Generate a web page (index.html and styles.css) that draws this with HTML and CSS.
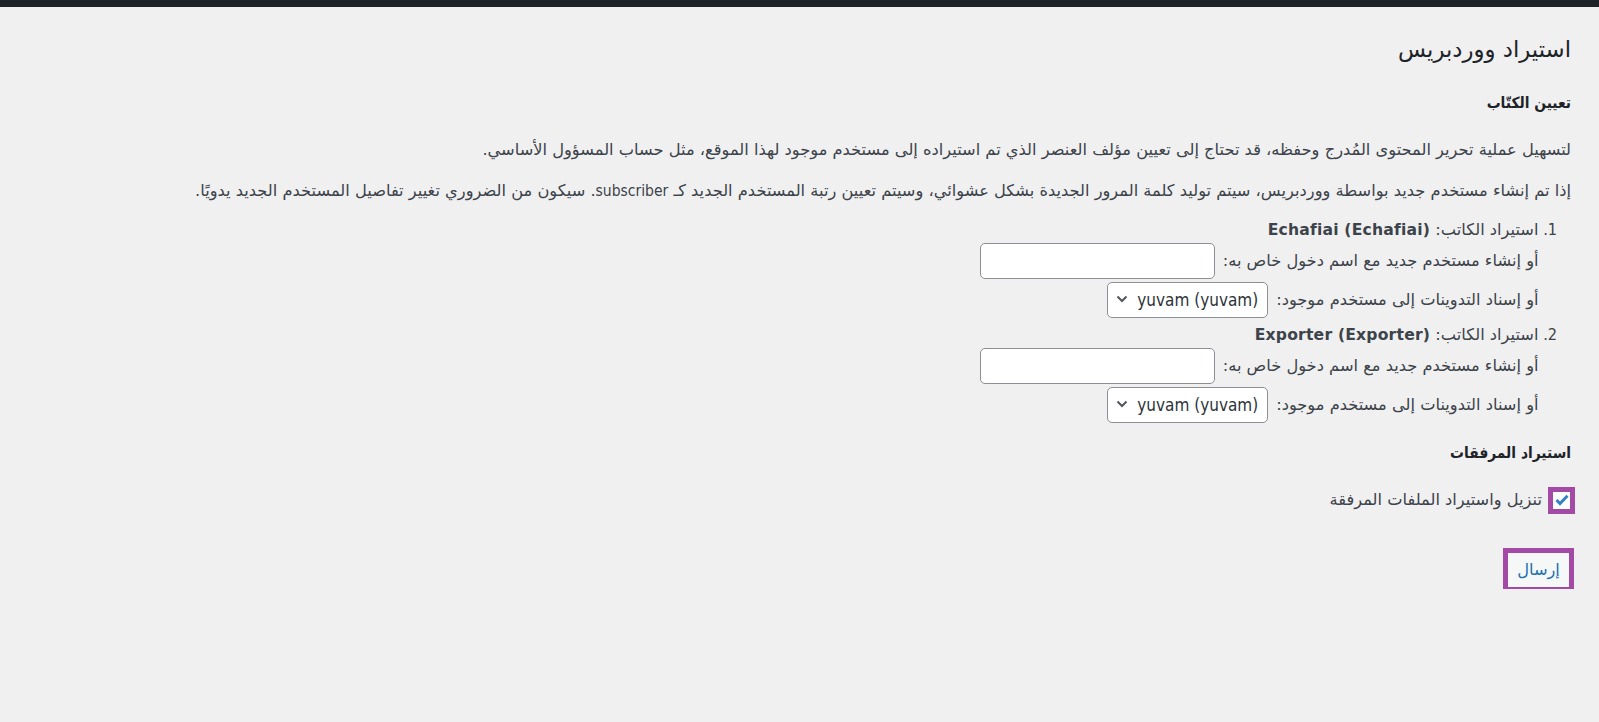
FILE: index.html
```html
<!DOCTYPE html>
<html lang="ar" dir="rtl">
<head>
<meta charset="utf-8">
<title>استيراد ووردبريس</title>
<link rel="stylesheet" href="styles.css">
</head>
<body>
<div class="adminbar"></div>
<div class="wrap">
  <h1 class="page-title">استيراد ووردبريس</h1>
  <h3 class="section-title">تعيين الكتّاب</h3>
  <p class="intro">لتسهيل عملية تحرير المحتوى المُدرج وحفظه، قد تحتاج إلى تعيين مؤلف العنصر الذي تم استيراده إلى مستخدم موجود لهذا الموقع، مثل حساب المسؤول الأساسي.</p>
  <p class="intro intro-second">إذا تم إنشاء مستخدم جديد بواسطة ووردبريس، سيتم توليد كلمة المرور الجديدة بشكل عشوائي، وسيتم تعيين رتبة المستخدم الجديد كـ <span class="latin">subscriber</span>. سيكون من الضروري تغيير تفاصيل المستخدم الجديد يدويًا.</p>
  <ol class="authors">
    <li class="author">
      <div class="author-title">استيراد الكاتب: <strong class="latin-bold">Echafiai (Echafiai)</strong></div>
      <div class="author-row"><span>أو إنشاء مستخدم جديد مع اسم دخول خاص به:</span><input type="text" class="text-field"></div>
      <div class="author-row row-select"><span>أو إسناد التدوينات إلى مستخدم موجود:</span><span class="select-wrap"><select class="select-field"><option>yuvam (yuvam)</option></select><svg class="chevron" width="12" height="8" viewBox="0 0 12 8"><path d="M1.5 1.5 L6 6 L10.5 1.5" fill="none" stroke="#50575e" stroke-width="2"/></svg></span></div>
    </li>
    <li class="author">
      <div class="author-title">استيراد الكاتب: <strong class="latin-bold">Exporter (Exporter)</strong></div>
      <div class="author-row"><span>أو إنشاء مستخدم جديد مع اسم دخول خاص به:</span><input type="text" class="text-field"></div>
      <div class="author-row row-select"><span>أو إسناد التدوينات إلى مستخدم موجود:</span><span class="select-wrap"><select class="select-field"><option>yuvam (yuvam)</option></select><svg class="chevron" width="12" height="8" viewBox="0 0 12 8"><path d="M1.5 1.5 L6 6 L10.5 1.5" fill="none" stroke="#50575e" stroke-width="2"/></svg></span></div>
    </li>
  </ol>
  <h3 class="section-title attachments-title">استيراد المرفقات</h3>
  <div class="check-row">
    <label class="check-label"><span class="check-box"><svg width="14" height="12" viewBox="0 0 14 12"><path d="M1.5 6 L5 9.5 L12.5 1.8" fill="none" stroke="#3582c4" stroke-width="3"/></svg></span><span>تنزيل واستيراد الملفات المرفقة</span></label>
  </div>
  <p class="submit"><button type="button" class="button">إرسال</button></p>
</div>
</body>
</html>
```

FILE: styles.css
```css
* { box-sizing: border-box; }
html, body { margin: 0; padding: 0; background: #f0f0f1; }
body {
  font-family: "DejaVu Sans", sans-serif;
  font-size: 16.25px;
  line-height: 24.4px;
  color: #3c434a;
}
.latin { font-family: "DejaVu Sans Condensed", "DejaVu Sans", sans-serif; font-size: 15.5px; }
.latin-bold {
  font-family: "DejaVu Sans", sans-serif;
  font-size: 15.6px; font-weight: 700;
  letter-spacing: 0.2px;
  color: #3c434a;
}
.adminbar { height: 7px; background: #1d2327; }
.wrap { padding: 0 28px 0 20px; }
.page-title {
  margin: 26px 0 0;
  font-size: 22.8px;
  font-weight: 400;
  line-height: 33px;
  color: #1d2327;
}
.section-title {
  margin: 25px 0 0;
  font-family: "DejaVu Sans Condensed", "DejaVu Sans", sans-serif;
  font-size: 15.4px;
  font-weight: 700;
  line-height: 24px;
  color: #1d2327;
}
.intro { margin: 23px 0 0; }
.intro-second { margin-top: 17px; }
.authors { margin: 14.4px 32.5px 0 0; padding: 0; list-style: decimal; }
.author { margin-bottom: 4.6px; }
.author::marker { font-family: "DejaVu Sans Condensed", "DejaVu Sans", sans-serif; font-size: 16.25px; }
.author-title { height: 24.4px; white-space: nowrap; }
.author-row { display: flex; align-items: center; gap: 8px; margin-top: 0.6px; }
.row-select { margin-top: 3px; }
.text-field {
  width: 235px; height: 36px;
  border: 1px solid #8c8f94; border-radius: 5px;
  background: #fff; font: inherit; padding: 0 10px;
}
.select-wrap { position: relative; display: inline-flex; }
.select-field {
  -webkit-appearance: none; appearance: none;
  width: 161px; height: 36px;
  border: 1px solid #8c8f94; border-radius: 5px;
  background: #fff; color: #2c3338;
  font-family: "DejaVu Sans Condensed", "DejaVu Sans", sans-serif;
  font-size: 17px;
  padding: 0 9px 0 26px;
  direction: rtl;
}
.chevron { position: absolute; left: 9px; top: 13px; }
.attachments-title { margin-top: 18.5px; }
.check-row { margin-top: 23px; }
.check-label { display: flex; align-items: center; gap: 8px; }
.check-box {
  width: 23px; height: 23px;
  display: flex; align-items: center; justify-content: center;
  background: #fff;
  border: 3px solid #a24aa6;
  box-shadow: 0 0 0 2px #a24aa6;
  margin-right: -2px;
}
.submit { margin: 38px 0 0; }
.button {
  width: 65px; height: 38px;
  font-family: inherit; font-size: 16.25px;
  color: #2271b1;
  background: #f6f7f7;
  border: 2px solid #a24aa6;
  box-shadow: 0 0 0 3px #a24aa6;
  padding: 0;
}
```
